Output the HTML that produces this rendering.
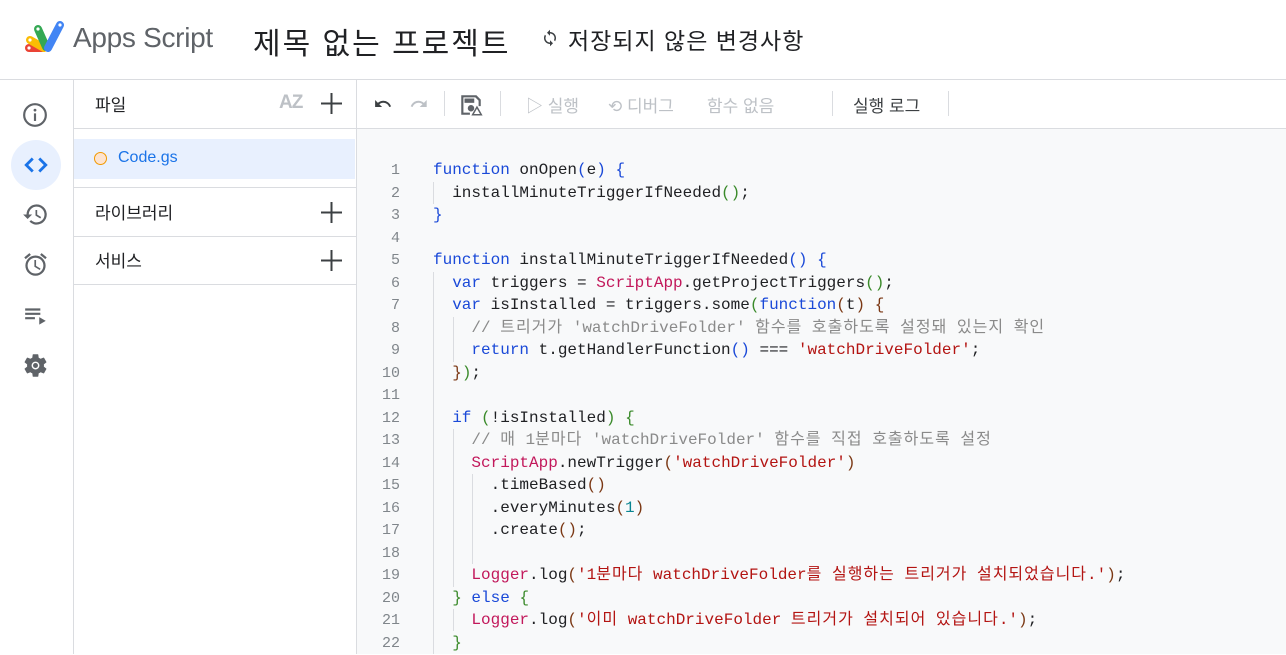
<!DOCTYPE html>
<html><head><meta charset="utf-8"><style>
*{margin:0;padding:0;box-sizing:border-box}
body{width:1286px;height:654px;overflow:hidden;background:#fff;font-family:"Liberation Sans","Noto Sans CJK KR",sans-serif;color:#3c4043;position:relative}
.abs{position:absolute}
.hline{position:absolute;height:1px;background:#dadce0}
.vline{position:absolute;width:1px;background:#dadce0}
.code{position:absolute;left:357px;top:129px;width:929px;height:525px;background:#f8f9fa}
.ln{position:absolute;left:360px;width:40px;text-align:right;font-family:"Liberation Mono",monospace;font-size:15px;color:#80868b}
pre{position:absolute;left:433px;top:159px;font-family:"Liberation Mono","Noto Sans CJK KR",monospace;font-size:16px;line-height:22.5px;color:#202124}
.k{color:#1a49d8}.s{color:#b31412}.c{color:#8a8a8a}.g{color:#c2185b}.n{color:#098591}
.b1{color:#1a49d8}.b2{color:#3a8a2a}.b3{color:#7b3814}
i{font-style:normal;letter-spacing:1px}
.guide{position:absolute;width:1px;background:#dadce0}
.tb{position:absolute;top:92px;font-size:17px;color:#bdc1c6}
.plus{position:absolute;left:320px}
</style></head><body>
<svg class="abs" style="left:24px;top:20px" width="42" height="34" viewBox="0 0 42 34">
<g stroke-linecap="round">
<line x1="5" y1="28" x2="18" y2="28" stroke="#ea4335" stroke-width="8"/>
<line x1="6" y1="20" x2="20" y2="28" stroke="#fbbc04" stroke-width="8"/>
<line x1="14" y1="9" x2="22" y2="27" stroke="#34a853" stroke-width="8"/>
<line x1="36" y1="5" x2="24" y2="28" stroke="#4285f4" stroke-width="8"/>
</g>
<circle cx="5" cy="28" r="1.6" fill="#fff"/><circle cx="6" cy="20" r="1.6" fill="#fff"/><circle cx="14" cy="9" r="1.6" fill="#fff"/><circle cx="36" cy="5" r="1.6" fill="#fff"/>
</svg>
<div class="abs" style="left:73px;top:22px;font-size:28px;color:#5f6368;letter-spacing:-0.3px">Apps Script</div>
<div class="abs" style="left:253px;top:19px;font-size:30px;color:#202124;letter-spacing:2px">제목 없는 프로젝트</div>
<svg class="abs" style="left:541px;top:29px" width="18" height="18" viewBox="0 0 24 24"><path d="M12 4V1L8 5l4 4V6c3.3 0 6 2.7 6 6 0 1-.3 2-.7 2.8l1.5 1.5C19.5 15 20 13.6 20 12c0-4.4-3.6-8-8-8zm0 14c-3.3 0-6-2.7-6-6 0-1 .3-2 .7-2.8L5.2 7.7C4.5 9 4 10.4 4 12c0 4.4 3.6 8 8 8v3l4-4-4-4v3z" fill="#3c4043"/></svg>
<div class="abs" style="left:568px;top:22px;font-size:23px;color:#202124;letter-spacing:1px">저장되지 않은 변경사항</div>
<div class="hline" style="left:0;top:79px;width:1286px"></div>
<div class="vline" style="left:73px;top:80px;height:574px"></div>
<svg class="abs" style="left:22px;top:102px" width="26" height="26" viewBox="0 0 24 24"><circle cx="12" cy="12" r="10" fill="none" stroke="#5f6368" stroke-width="2"/><rect x="11" y="10.5" width="2" height="7" fill="#5f6368"/><circle cx="12" cy="7.5" r="1.3" fill="#5f6368"/></svg>
<div class="abs" style="left:11px;top:140px;width:50px;height:50px;border-radius:50%;background:#e8f0fe"></div>
<svg class="abs" style="left:23px;top:152px" width="26" height="26" viewBox="0 0 24 24"><path d="M9 6l-6 6 6 6M15 6l6 6-6 6" fill="none" stroke="#1a73e8" stroke-width="2.6"/></svg>
<svg class="abs" style="left:22px;top:201px" width="27" height="27" viewBox="0 0 24 24"><path d="M13 3a9 9 0 0 0-9 9H1l4 4 4-4H6a7 7 0 1 1 2.05 4.95L6.64 18.360A9 9 0 1 0 13 3zm-1 5v5l4.25 2.52.77-1.28-3.52-2.090V8z" fill="#5f6368"/></svg>
<svg class="abs" style="left:22px;top:251px" width="27" height="27" viewBox="0 0 24 24"><path d="M22 5.72l-4.6-3.86-1.29 1.53 4.6 3.86zM7.88 3.39L6.6 1.86 2 5.71l1.29 1.53zM12.5 8H11v6l4.75 2.85.75-1.23-4-2.37zM12 4a9 9 0 1 0 .01 18A9 9 0 0 0 12 4zm0 16a7 7 0 1 1 0-14 7 7 0 0 1 0 14z" fill="#5f6368"/></svg>
<svg class="abs" style="left:23px;top:303px" width="26" height="26" viewBox="0 0 24 24"><path d="M2 5h14v2H2zm0 4h14v2H2zm0 4h9v2H2zm13 0v7l6-3.5z" fill="#5f6368"/></svg>
<svg class="abs" style="left:22px;top:352px" width="27" height="27" viewBox="0 0 24 24"><path d="M19.43 12.98c.04-.32.07-.64.07-.98s-.03-.66-.07-.98l2.11-1.65a.5.5 0 0 0 .12-.64l-2-3.46a.5.5 0 0 0-.61-.22l-2.49 1a7.3 7.3 0 0 0-1.69-.98l-.38-2.65A.49.49 0 0 0 14 2h-4a.49.49 0 0 0-.49.42l-.38 2.65c-.61.25-1.170.59-1.69.98l-2.49-1a.5.5 0 0 0-.61.22l-2 3.46a.49.49 0 0 0 .12.64l2.11 1.65c-.04.32-.07.65-.07.98s.03.66.07.98l-2.11 1.65a.5.5 0 0 0-.12.64l2 3.46c.12.22.39.3.61.22l2.49-1c.52.4 1.080.73 1.69.98l.38 2.65c.03.24.24.42.49.42h4c.25 0 .46-.18.49-.42l.38-2.65a7.7 7.7 0 0 0 1.69-.98l2.49 1c.23.09.49 0 .61-.22l2-3.46a.5.5 0 0 0-.12-.64zM12 15.5a3.5 3.5 0 1 1 0-7 3.5 3.5 0 0 1 0 7z" fill="#5f6368"/><circle cx="12" cy="12" r="2.2" fill="#5f6368"/></svg>
<div class="vline" style="left:356px;top:80px;height:574px"></div>
<div class="abs" style="left:95px;top:91px;font-size:17px;color:#202124">파일</div>
<div class="abs" style="left:279px;top:92px;font-size:19px;font-weight:bold;color:#bdc1c6;letter-spacing:-1px">AZ</div>
<svg class="plus" style="top:92px" width="23" height="23" viewBox="0 0 23 23"><path d="M11.5 1v21M1 11.5h21" stroke="#3c4043" stroke-width="2"/></svg>
<div class="hline" style="left:74px;top:128px;width:282px"></div>
<div class="abs" style="left:74px;top:139px;width:281px;height:40px;background:#e8f0fe"></div>
<div class="abs" style="left:94px;top:152px;width:13px;height:13px;border-radius:50%;border:1.5px solid #f29900;background:#fde3cf"></div>
<div class="abs" style="left:118px;top:149px;font-size:16px;color:#1a73e8">Code.gs</div>
<div class="hline" style="left:74px;top:187px;width:282px"></div>
<div class="abs" style="left:95px;top:199px;font-size:17px;color:#202124">라이브러리</div>
<svg class="plus" style="top:201px" width="23" height="23" viewBox="0 0 23 23"><path d="M11.5 1v21M1 11.5h21" stroke="#3c4043" stroke-width="2"/></svg>
<div class="hline" style="left:74px;top:236px;width:282px"></div>
<div class="abs" style="left:95px;top:247px;font-size:17px;color:#202124">서비스</div>
<svg class="plus" style="top:249px" width="23" height="23" viewBox="0 0 23 23"><path d="M11.5 1v21M1 11.5h21" stroke="#3c4043" stroke-width="2"/></svg>
<div class="hline" style="left:74px;top:284px;width:282px"></div>
<svg class="abs" style="left:372px;top:93px" width="22" height="22" viewBox="0 0 24 24"><path d="M12.5 8c-2.65 0-5.05 1-6.9 2.6L2 7v9h9l-3.62-3.62A8 8 0 0 1 20.16 16l2.37-.78A10.5 10.5 0 0 0 12.5 8z" fill="#3c4043" transform="scale(0.85) translate(2,2)"/></svg>
<svg class="abs" style="left:408px;top:93px" width="22" height="22" viewBox="0 0 24 24"><path d="M18.4 10.6A10.5 10.5 0 0 0 1.47 15.22l2.37.78A8 8 0 0 1 16.62 12.38L13 16h9V7z" fill="#bdc1c6" transform="scale(0.85) translate(2,2)"/></svg>
<div class="vline" style="left:444px;top:91px;height:25px"></div>
<svg class="abs" style="left:458px;top:92px" width="26" height="26" viewBox="0 0 24 24"><path d="M3 3h14l4 4v6h-2V8l-3-3H5v14h6v2H3z" fill="#5f6368"/><rect x="6" y="6" width="9" height="4" fill="#5f6368"/><circle cx="12" cy="15" r="3" fill="#5f6368"/><path d="M17.5 14l4 7h-8z" fill="none" stroke="#5f6368" stroke-width="1.4"/></svg>
<div class="vline" style="left:500px;top:91px;height:25px"></div>
<div class="tb" style="left:526px">▷ 실행</div>
<div class="tb" style="left:608px">⟲ 디버그</div>
<div class="tb" style="left:707px">함수 없음</div>
<div class="vline" style="left:832px;top:91px;height:25px"></div>
<div class="tb" style="left:853px;color:#3c4043">실행 로그</div>
<div class="vline" style="left:948px;top:91px;height:25px"></div>
<div class="hline" style="left:357px;top:128px;width:929px"></div>
<div class="code"></div>
<div class="ln" style="top:160px;line-height:22.5px">1<br>2<br>3<br>4<br>5<br>6<br>7<br>8<br>9<br>10<br>11<br>12<br>13<br>14<br>15<br>16<br>17<br>18<br>19<br>20<br>21<br>22</div>
<div class="guide" style="left:433px;top:182px;height:22px"></div>
<div class="guide" style="left:433px;top:272px;height:382px"></div>
<div class="guide" style="left:453px;top:317px;height:45px"></div>
<div class="guide" style="left:453px;top:429px;height:158px"></div>
<div class="guide" style="left:453px;top:609px;height:22px"></div>
<div class="guide" style="left:472px;top:474px;height:90px"></div>
<pre><span class="k">function</span> onOpen<span class="b1">(</span>e<span class="b1">)</span> <span class="b1">{</span>
  installMinuteTriggerIfNeeded<span class="b2">()</span>;
<span class="b1">}</span>

<span class="k">function</span> installMinuteTriggerIfNeeded<span class="b1">()</span> <span class="b1">{</span>
  <span class="k">var</span> triggers = <span class="g">ScriptApp</span>.getProjectTriggers<span class="b2">()</span>;
  <span class="k">var</span> isInstalled = triggers.some<span class="b2">(</span><span class="k">function</span><span class="b3">(</span>t<span class="b3">)</span> <span class="b3">{</span>
    <span class="c">// <i>트리거가</i> 'watchDriveFolder' <i>함수를</i> <i>호출하도록</i> <i>설정돼</i> <i>있는지</i> <i>확인</i></span>
    <span class="k">return</span> t.getHandlerFunction<span class="b1">()</span> === <span class="s">'watchDriveFolder'</span>;
  <span class="b3">}</span><span class="b2">)</span>;

  <span class="k">if</span> <span class="b2">(</span>!isInstalled<span class="b2">)</span> <span class="b2">{</span>
    <span class="c">// <i>매</i> 1<i>분마다</i> 'watchDriveFolder' <i>함수를</i> <i>직접</i> <i>호출하도록</i> <i>설정</i></span>
    <span class="g">ScriptApp</span>.newTrigger<span class="b3">(</span><span class="s">'watchDriveFolder'</span><span class="b3">)</span>
      .timeBased<span class="b3">()</span>
      .everyMinutes<span class="b3">(</span><span class="n">1</span><span class="b3">)</span>
      .create<span class="b3">()</span>;

    <span class="g">Logger</span>.log<span class="b3">(</span><span class="s">'1<i>분마다</i> watchDriveFolder<i>를</i> <i>실행하는</i> <i>트리거가</i> <i>설치되었습니다</i>.'</span><span class="b3">)</span>;
  <span class="b2">}</span> <span class="k">else</span> <span class="b2">{</span>
    <span class="g">Logger</span>.log<span class="b3">(</span><span class="s">'<i>이미</i> watchDriveFolder <i>트리거가</i> <i>설치되어</i> <i>있습니다</i>.'</span><span class="b3">)</span>;
  <span class="b2">}</span>
</pre>
</body></html>
